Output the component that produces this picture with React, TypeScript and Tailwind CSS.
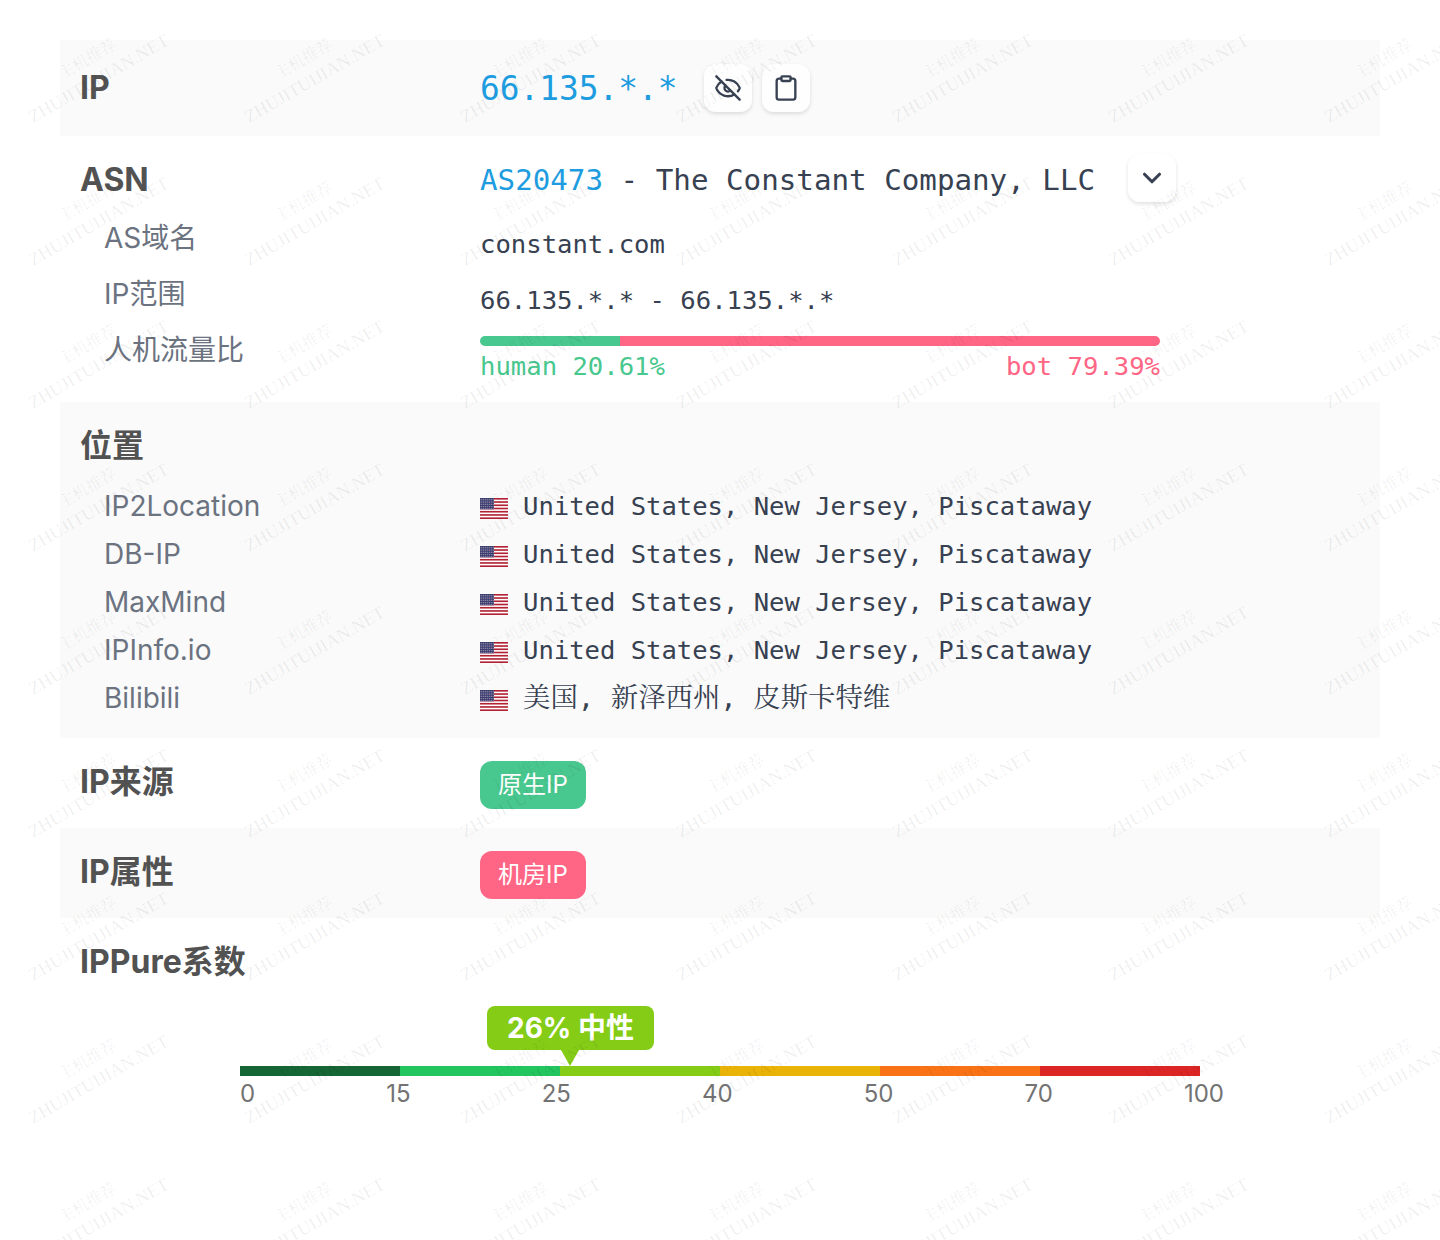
import { ChevronDown, Clipboard, EyeOff } from 'lucide-react'

const mono = "font-['DejaVu_Sans_Mono','Noto_Sans_CJK_SC',monospace]"
const monoSerif = "font-['DejaVu_Sans_Mono','Noto_Serif_CJK_SC',serif]"

function Flag() {
  const stars = []
  for (let y = 1.2; y < 11; y += 1.8) {
    for (let x = 1.2; x < 14; x += 2) {
      stars.push(<circle key={`${x}-${y}`} cx={x} cy={y} r="0.5" fill="#fff" fillOpacity="0.65" />)
    }
  }
  return (
    <svg width="28" height="21" viewBox="0 0 28 21" className="mt-1 shrink-0">
      <rect width="28" height="21" fill="#fff" />
      {[0, 1, 2, 3, 4, 5, 6].map((i) => (
        <rect key={i} y={i * 3.23} width="28" height="1.62" fill="#b22234" />
      ))}
      <rect width="14" height="11.3" fill="#3c3b6e" />
      {stars}
    </svg>
  )
}

function ToolButton({ children }: { children: React.ReactNode }) {
  return (
    <button className="flex h-12 w-12 items-center justify-center rounded-xl bg-white/70 text-[#374151] shadow-[0_2px_4px_rgba(0,0,0,0.12)]">
      {children}
    </button>
  )
}

function Watermarks() {
  const tiles = []
  for (let r = 0; r < 9; r++) {
    for (let c = 0; c < 7; c++) {
      tiles.push(
        <div
          key={`${r}-${c}`}
          className="absolute w-[200px] -rotate-30 text-center font-['Liberation_Serif','Noto_Serif_CJK_SC',serif] text-[18px] leading-[22px] text-black/[0.07]"
          style={{ left: -7 + c * 216, top: 47 + r * 143 }}
        >
          <div className="text-[16px]">主机推荐</div>
          <div>ZHUJITUIJIAN.NET</div>
        </div>,
      )
    }
  }
  return <div className="pointer-events-none absolute inset-0 overflow-hidden">{tiles}</div>
}

const locations = [
  ['IP2Location', 'United States, New Jersey, Piscataway'],
  ['DB-IP', 'United States, New Jersey, Piscataway'],
  ['MaxMind', 'United States, New Jersey, Piscataway'],
  ['IPInfo.io', 'United States, New Jersey, Piscataway'],
]

const segments = ['bg-[#166534]', 'bg-[#22c55e]', 'bg-[#84cc16]', 'bg-[#eab308]', 'bg-[#f97316]', 'bg-[#dc2626]']
const ticks = ['0', '15', '25', '40', '50', '70', '100']

export default function App() {
  return (
    <div className="relative h-[1240px] overflow-hidden bg-white font-['Inter','Noto_Sans_CJK_SC',sans-serif] text-[#525252]">
      <div className="px-[60px] pt-10">
        {/* IP */}
        <div className="flex h-24 items-center bg-[#fafafa] pl-5">
          <div className="w-[400px] text-[32px] font-bold">IP</div>
          <div className="flex items-center">
            <span className={`${mono} mt-1 text-[32.8px] text-[#1e9ce0]`}>66.135.*.*</span>
            <div className="ml-[27px] flex gap-2.5">
              <ToolButton><EyeOff size={28} /></ToolButton>
              <ToolButton><Clipboard size={28} /></ToolButton>
            </div>
          </div>
        </div>

        {/* ASN */}
        <div className="flex h-[266px] pl-5">
          <div className="w-[400px] pt-[14px]">
            <div className="flex h-[60px] items-center text-[32px] font-bold">ASN</div>
            <div className="flex h-14 items-center pl-6 text-[28px] text-[#6b7280]">AS域名</div>
            <div className="flex h-14 items-center pl-6 text-[28px] text-[#6b7280]">IP范围</div>
            <div className="flex h-14 items-center pl-6 text-[28px] text-[#6b7280]">人机流量比</div>
          </div>
          <div>
            <div className="flex h-20 items-center">
              <span className={`${mono} mt-[10px] text-[29.2px] text-[#374151]`}><span className="text-[#1e9ce0]">AS20473</span> - The Constant Company, LLC</span>
              <div className="ml-[33px] mt-1"><ToolButton><ChevronDown size={30} strokeWidth={2.5} /></ToolButton></div>
            </div>
            <div className={`${mono} flex h-14 items-center text-[25.6px] text-[#374151]`}>constant.com</div>
            <div className={`${mono} flex h-14 items-center text-[25.6px] text-[#374151]`}>66.135.*.* - 66.135.*.*</div>
            <div className="mt-2 w-[680px]">
              <div className="flex h-[10px] overflow-hidden rounded-full">
                <div className="w-[20.61%] bg-[#48c78e]" />
                <div className="flex-1 bg-[#ff6685]" />
              </div>
              <div className={`${mono} mt-0.5 flex justify-between text-[25.6px] leading-[36px]`}>
                <span className="text-[#48c78e]">human 20.61%</span>
                <span className="text-[#ff6685]">bot 79.39%</span>
              </div>
            </div>
          </div>
        </div>

        {/* 位置 */}
        <div className="h-[336px] bg-[#fafafa] pl-5">
          <div className="flex h-20 items-center pt-2 text-[32px] font-bold">位置</div>
          <div>
            {locations.map(([name, value]) => (
              <div key={name} className="flex h-12 items-center">
                <div className="w-[400px] pl-6 text-[28px] text-[#6b7280]">{name}</div>
                <Flag />
                <span className={`${mono} ml-[15px] text-[25.55px] text-[#374151]`}>{value}</span>
              </div>
            ))}
            <div className="flex h-12 items-center">
              <div className="w-[400px] pl-6 text-[28px] text-[#6b7280]">Bilibili</div>
              <Flag />
              <span className={`${monoSerif} ml-[15px] text-[27.4px] text-[#374151]`}>美国, 新泽西州, 皮斯卡特维</span>
            </div>
          </div>
        </div>

        {/* IP来源 */}
        <div className="flex h-[90px] items-center pl-5">
          <div className="-mt-0.5 w-[400px] text-[32px] font-bold">IP来源</div>
          <span className="mt-1 flex h-12 w-[106px] items-center justify-center rounded-xl bg-[#48c78e] text-[24px] text-white">原生IP</span>
        </div>

        {/* IP属性 */}
        <div className="flex h-[90px] items-center bg-[#fafafa] pl-5">
          <div className="-mt-0.5 w-[400px] text-[32px] font-bold">IP属性</div>
          <span className="mt-1 flex h-12 w-[106px] items-center justify-center rounded-xl bg-[#ff6685] text-[24px] text-white">机房IP</span>
        </div>

        {/* IPPure系数 */}
        <div className="pl-5">
          <div className="flex h-[88px] items-center text-[32px] font-bold">IPPure系数</div>
          <div className="relative ml-[160px] mt-[60px] w-[984px]">
            <div className="absolute -top-[60px] left-[247px] flex h-11 w-[167px] items-center justify-center rounded-lg bg-[#84cc16] text-[28px] font-bold text-white">
              26% 中性
              <div className="absolute -bottom-[16px] left-[74px] h-0 w-0 border-x-[9px] border-t-[16px] border-x-transparent border-t-[#84cc16]" />
            </div>
            <div className="flex w-[960px]">
              {segments.map((color) => (
                <div key={color} className={`h-[10px] flex-1 ${color}`} />
              ))}
            </div>
            <div className="flex justify-between text-[24px] leading-[36px] text-[#737373]">
              {ticks.map((t) => (
                <span key={t}>{t}</span>
              ))}
            </div>
          </div>
        </div>
      </div>
      <Watermarks />
    </div>
  )
}
